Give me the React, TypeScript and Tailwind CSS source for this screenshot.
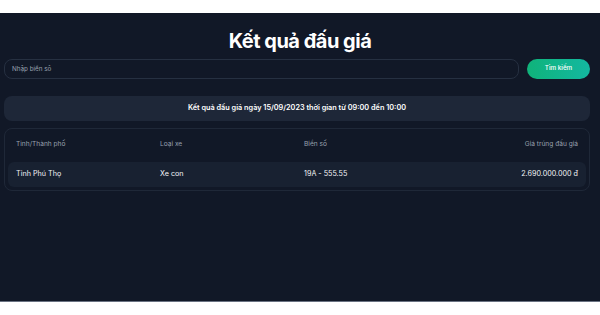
const rows = [
  { province: "Tỉnh Phú Thọ", type: "Xe con", plate: "19A - 555.55", price: "2.690.000.000 đ" },
];

export default function App() {
  return (
    <div className="h-[315px] w-[600px] bg-white pt-[13px] font-['Inter',sans-serif]">
      <div className="h-[289px] border-b border-gray-500 bg-[#111827]">
        <h1 className="pt-[14px] text-center text-xl leading-7 font-bold tracking-tight text-white">
          Kết quả đấu giá
        </h1>

        <div className="mt-[4px] flex gap-[8px] pl-[4px] pr-[10px]">
          <input
            type="text"
            placeholder="Nhập biển số"
            className="h-[20px] flex-1 rounded-lg border border-[#263041] bg-[#111827] px-[7px] text-[6.3px] text-gray-200 placeholder:text-gray-400 outline-none"
          />
          <button
            type="button"
            className="h-[20px] w-[63px] rounded-full bg-linear-to-r from-[#10b37a] to-[#14b8a0] text-[6.3px] font-medium text-white"
          >
            Tìm kiếm
          </button>
        </div>

        <div className="mt-[17px] ml-[4px] mr-[10px] flex h-[25px] items-center justify-center rounded-lg bg-[#1e2738] text-[7.3px] font-semibold text-white">
          Kết quả đấu giá ngày 15/09/2023 thời gian từ 09:00 đến 10:00
        </div>

        <div className="mt-[7px] ml-[4px] mr-[10px] rounded-lg border border-[#1f2838] px-[3px] pt-[4px] pb-[3px]">
          <div className="grid h-[24px] grid-cols-[144px_144px_1fr_auto] items-center px-2 text-[6.6px] text-gray-400">
            <span>Tỉnh/Thành phố</span>
            <span>Loại xe</span>
            <span>Biển số</span>
            <span className="text-right">Giá trúng đấu giá</span>
          </div>
          {rows.map((r) => (
            <div
              key={r.plate}
              className="mt-[5px] grid h-[25px] grid-cols-[144px_144px_1fr_auto] items-center rounded-md bg-[#182131] px-2 text-[7.2px] text-gray-100"
            >
              <span>{r.province}</span>
              <span>{r.type}</span>
              <span>{r.plate}</span>
              <span className="text-right">{r.price}</span>
            </div>
          ))}
        </div>
      </div>
    </div>
  );
}
